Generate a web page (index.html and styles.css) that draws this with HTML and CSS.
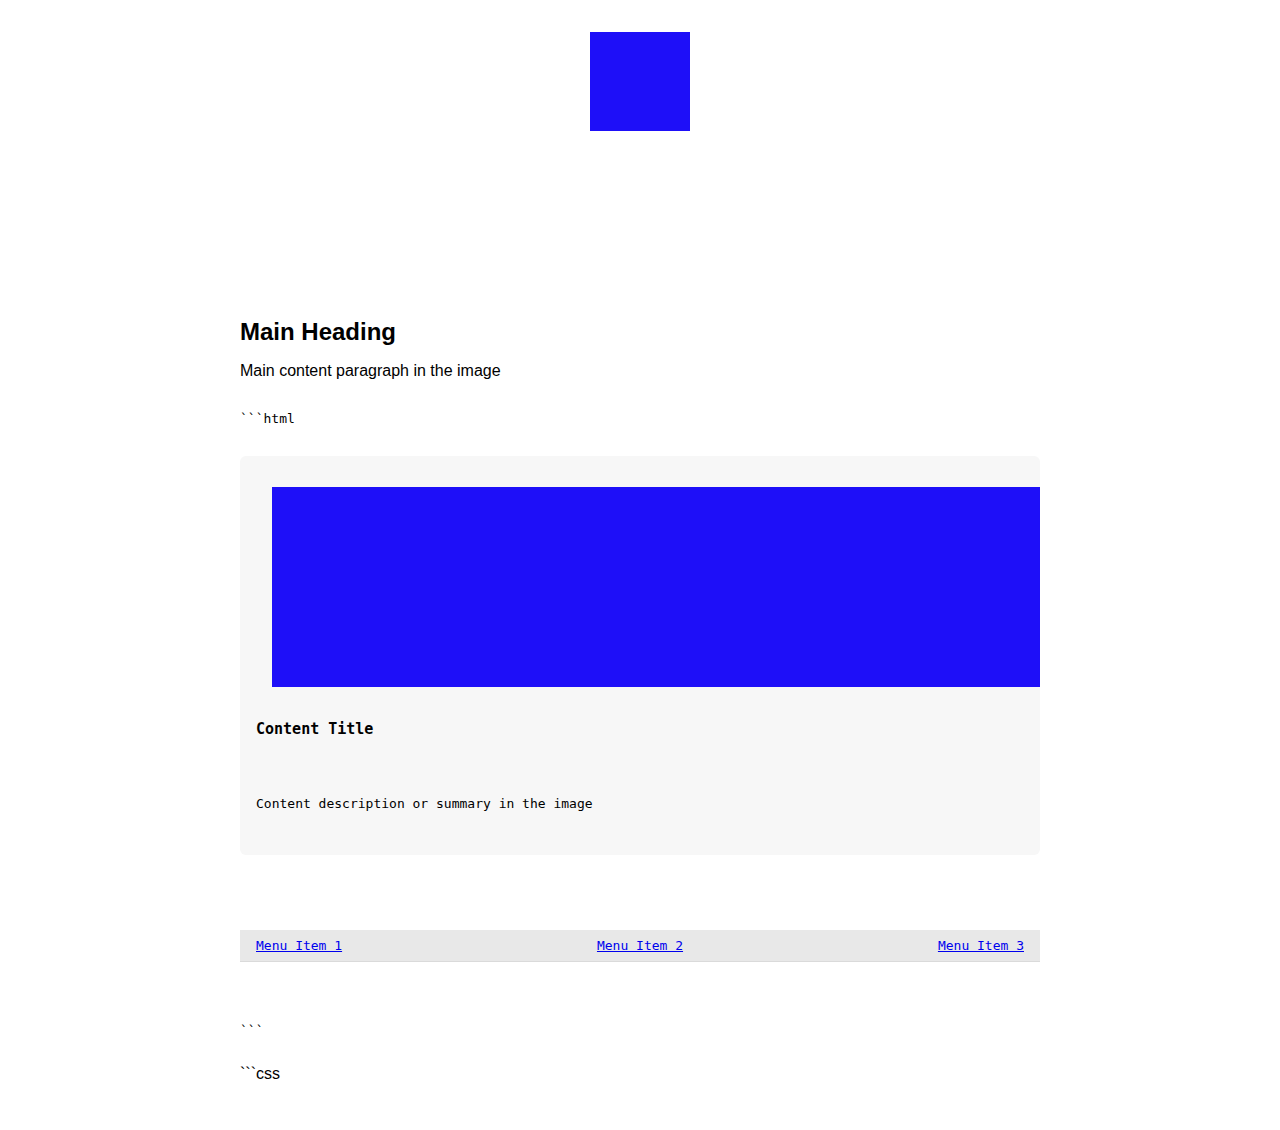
FILE: index.html
```html
<!DOCTYPE html>
<html>
<head>
<meta charset="utf-8">
<link rel="stylesheet" href="styles.css">
</head>
<body>
<header class="site-header">
  <div class="logo"></div>
</header>
<main class="main">
  <h1 class="main-heading">Main Heading</h1>
  <p class="main-text">Main content paragraph in the image</p>
  <p class="code-fence">```html</p>
  <section class="card">
    <div class="card-image"></div>
    <h2 class="card-title">Content Title</h2>
    <p class="card-desc">Content description or summary in the image</p>
  </section>
  <nav class="menu">
    <a href="#">Menu Item 1</a>
    <a href="#">Menu Item 2</a>
    <a href="#">Menu Item 3</a>
  </nav>
  <p class="code-fence end-fence">```</p>
  <p class="css-fence">```css</p>
</main>
</body>
</html>
```
FILE: styles.css
```css
html, body {
  margin: 0;
  padding: 0;
  background: #ffffff;
}
body {
  font-family: "Liberation Sans", Arial, sans-serif;
  color: #000;
}
.site-header {
  display: flex;
  justify-content: center;
  padding-top: 32px;
}
.logo {
  width: 100px;
  height: 99px;
  background: #1e0ff8;
}
.main {
  width: 800px;
  margin: 0 auto;
  padding-top: 187px;
}
.main-heading {
  font-size: 24px;
  font-weight: bold;
  margin: 0;
  line-height: 28px;
}
.main-text {
  font-size: 16px;
  margin: 16px 0 0;
  line-height: 18px;
}
.code-fence {
  font-family: "DejaVu Sans Mono", monospace;
  font-size: 13px;
  line-height: 15px;
  margin: 31px 0 0;
}
.card {
  background: #f7f7f7;
  border-radius: 6px;
  margin-top: 30px;
  padding: 31px 16px 28px;
  height: 399px;
  box-sizing: border-box;
}
.card-image {
  height: 200px;
  margin-left: 16px;
  margin-right: -16px;
  background: #1e0ff8;
}
.card-title {
  font-family: "DejaVu Sans Mono", monospace;
  font-size: 15px;
  font-weight: bold;
  line-height: 18px;
  margin: 33px 0 0;
}
.card-desc {
  font-family: "DejaVu Sans Mono", monospace;
  font-size: 13px;
  line-height: 15px;
  margin: 58px 0 0;
}
.menu {
  margin-top: 75px;
  display: flex;
  justify-content: space-between;
  align-items: center;
  padding: 0 16px;
  background: #e8e8e8;
  border-bottom: 1px solid #dadada;
  box-sizing: border-box;
  height: 32px;
}
.menu a {
  font-family: "DejaVu Sans Mono", monospace;
  font-size: 13px;
  color: #0000ee;
  text-decoration: underline;
}
.end-fence {
  margin-top: 61px;
}
.css-fence {
  font-size: 16px;
  line-height: 18px;
  margin: 27px 0 0;
}
```
